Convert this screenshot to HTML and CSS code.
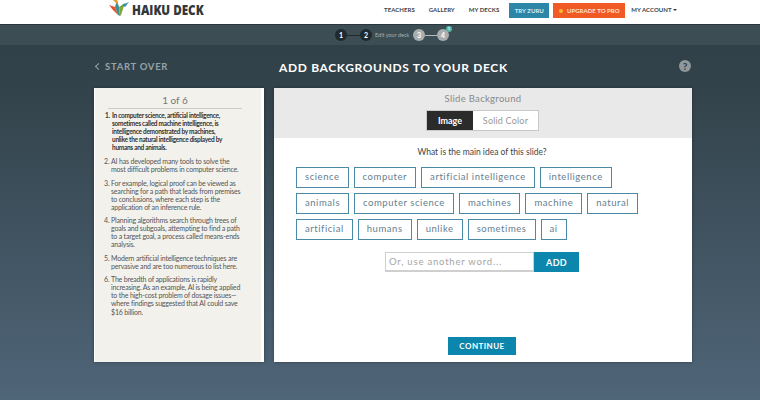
FILE: index.html
```html
<!DOCTYPE html>
<html lang="en">
<head>
  <meta charset="UTF-8">
  <meta name="viewport" content="width=device-width, initial-scale=1">
  <title>Haiku Deck</title>
  <link rel="stylesheet" href="styles.css">
</head>
<body>
  <header class="topbar">
    <a class="logo">
      <svg class="logo-mark" width="20" height="17" viewBox="0 0 20 17">
        <polygon points="0,5 6,7 9,15 4,10" fill="#e8502a"/>
        <polygon points="6,7 8,0 10,7 11,16 9,15" fill="#3f8f8c"/>
        <polygon points="4,0 8,0 9,5" fill="#e8a02a"/>
        <polygon points="10,7 16,3 12,15 11,16" fill="#7fa63c"/>
        <polygon points="13,5 20,2 16,7" fill="#2c8fb0"/>
      </svg>
      <span class="logo-text">HAIKU DECK</span>
    </a>
    <nav class="topnav">
      <a class="nav-link">TEACHERS</a>
      <a class="nav-link">GALLERY</a>
      <a class="nav-link">MY DECKS</a>
      <a class="btn-zuru">TRY ZURU</a>
      <a class="btn-pro"><span class="pro-dot"></span>UPGRADE TO PRO</a>
      <a class="nav-account">MY ACCOUNT <span class="caret"></span></a>
    </nav>
  </header>

  <div class="steps">
    <span class="step step-done">1</span>
    <span class="line"></span>
    <span class="step step-done">2</span>
    <span class="step-label">Edit your deck</span>
    <span class="step step-todo">3</span>
    <span class="line line-todo"></span>
    <span class="step step-todo">4<span class="step-badge">1</span></span>
  </div>

  <main class="page">
    <div class="title-row">
      <a class="start-over"><span class="chev"></span>START OVER</a>
      <h1>ADD BACKGROUNDS TO YOUR DECK</h1>
      <span class="help">?</span>
    </div>

    <div class="panels">
      <aside class="slide-text">
        <div class="count">1 of 6</div>
        <ol>
          <li class="current">In computer science, artificial intelligence, sometimes called machine intelligence, is intelligence demonstrated by machines,<br>unlike the natural intelligence displayed by<br>humans and animals.</li>
          <li>AI has developed many tools to solve the most difficult problems in computer science.</li>
          <li>For example, logical proof can be viewed as searching for a path that leads from premises to conclusions, where each step is the application of an inference rule.</li>
          <li>Planning algorithms search through trees of goals and subgoals, attempting to find a path to a target goal, a process called means-ends analysis.</li>
          <li>Modern artificial intelligence techniques are pervasive and are too numerous to list here.</li>
          <li>The breadth of applications is rapidly increasing. As an example, AI is being applied to the high-cost problem of dosage issues—where findings suggested that AI could save $16 billion.</li>
        </ol>
      </aside>

      <section class="editor">
        <div class="editor-head">
          <div class="editor-title">Slide Background</div>
          <div class="toggle">
            <span class="toggle-on">Image</span>
            <span class="toggle-off">Solid Color</span>
          </div>
        </div>
        <div class="editor-body">
          <p class="question">What is the main idea of this slide?</p>
          <div class="tags">
            <span class="tag">science</span>
            <span class="tag">computer</span>
            <span class="tag">artificial intelligence</span>
            <span class="tag">intelligence</span>
            <span class="tag">animals</span>
            <span class="tag">computer science</span>
            <span class="tag">machines</span>
            <span class="tag">machine</span>
            <span class="tag">natural</span>
            <span class="tag">artificial</span>
            <span class="tag">humans</span>
            <span class="tag">unlike</span>
            <span class="tag">sometimes</span>
            <span class="tag">ai</span>
          </div>
          <div class="word-form">
            <input class="word-input" type="text" placeholder="Or, use another word...">
            <button class="word-add">ADD</button>
          </div>
          <button class="continue">CONTINUE</button>
        </div>
      </section>
    </div>
  </main>
</body>
</html>
```

FILE: styles.css
```css
* { box-sizing: border-box; }
html, body { height: 100%; }
body {
  margin: 0;
  height: 400px;
  overflow: hidden;
  font-family: "Lato", sans-serif;
  background: linear-gradient(#2f3e45 0, #33434b 90px, #4f6578 400px);
}

.topbar {
  height: 25px;
  background: #fff;
  border-bottom: 1px solid #2a363b;
  display: flex;
  justify-content: space-between;
  padding: 0 83px 0 109px;
}
.logo { display: flex; align-items: flex-start; }
.logo-text {
  font-family: "Open Sans", sans-serif;
  font-weight: 800;
  font-size: 14px;
  line-height: 19px;
  color: #33373a;
  margin-left: 3px;
  white-space: nowrap;
  transform: scaleX(.83);
  transform-origin: left;
}
.topnav {
  display: flex;
  align-items: flex-start;
  font-size: 6px;
  font-weight: 700;
  letter-spacing: .05px;
  color: #3c4447;
  line-height: 20px;
}
.nav-link { margin-right: 14px; }
.nav-link:nth-child(3) { margin-right: 10px; }
.btn-zuru, .btn-pro {
  height: 15px;
  margin-top: 3px;
  line-height: 15px;
  text-align: center;
}
.btn-zuru { width: 40px; background: #2d86a8; color: #d7edf3; margin-right: 4px; }
.btn-pro { width: 72px; background: #f15a24; color: #ffe3d4; margin-right: 6px; }
.pro-dot {
  display: inline-block;
  width: 4px;
  height: 4px;
  background: #f7b733;
  border-radius: 50%;
  margin-right: 4px;
}
.caret {
  display: inline-block;
  border: 2px solid transparent;
  border-top: 2px solid #333;
  border-bottom: 0;
  vertical-align: middle;
}

.steps {
  height: 20px;
  background: #3c4d53;
  display: flex;
  align-items: center;
  padding-left: 335px;
  color: #fff;
}
.step {
  position: relative;
  width: 12px;
  height: 12px;
  border-radius: 50%;
  font-weight: 700;
  font-size: 7px;
  line-height: 12px;
  text-align: center;
}
.step-done { background: #1e2a30; }
.step-todo { background: #a9aeb0; }
.line { width: 13px; height: 1px; background: #1e2a30; }
.line-todo { width: 12px; background: #b5babb; }
.step-label {
  width: 35px;
  margin: 0 3px;
  color: #a4b0b3;
  white-space: nowrap;
  font-size: 5.5px;
}
.step-badge {
  position: absolute;
  top: -3px;
  right: -3px;
  width: 6px;
  height: 6px;
  border-radius: 50%;
  background: #55b9a6;
  font-size: 4px;
  line-height: 6px;
}

.page { width: 598px; margin-left: 94px; }
.title-row {
  height: 43px;
  display: flex;
  align-items: center;
  position: relative;
  padding-top: 1px;
}
.start-over {
  font-size: 9.5px;
  font-weight: 700;
  letter-spacing: .7px;
  color: #97a3a8;
  margin-bottom: 2px;
}
.chev {
  display: inline-block;
  width: 5px;
  height: 5px;
  border-left: 1.5px solid #97a3a8;
  border-bottom: 1.5px solid #97a3a8;
  transform: rotate(45deg);
  margin: 0 4px 1px 2px;
}
h1 {
  margin: 0 0 0 111px;
  font-size: 12px;
  font-weight: 700;
  letter-spacing: .63px;
  color: #fff;
}
.help {
  position: absolute;
  right: 1px;
  top: 15px;
  width: 12px;
  height: 12px;
  border-radius: 50%;
  background: #8f989b;
  color: #33434b;
  font-size: 10px;
  font-weight: 900;
  line-height: 12px;
  text-align: center;
}

.panels { display: flex; gap: 10px; height: 274px; }
.slide-text {
  width: 170px;
  background: #f2f1ec;
  border-left: 1px solid #fff;
  border-right: 3px solid #fff;
  padding: 6px 19px 0 13px;
  color: #555;
  box-shadow: 0 0 3px rgba(0, 0, 0, .35);
}
.count {
  font-size: 10px;
  line-height: 13px;
  padding-bottom: 1px;
  color: #777;
  text-align: center;
  border-bottom: 1px solid #ccc;
}
.slide-text ol {
  margin: 3px 0 0;
  padding: 0 0 0 3px;
  font-size: 7px;
  letter-spacing: -.18px;
  line-height: 8.1px;
  color: #555;
}
.slide-text li { margin-bottom: 5.2px; }
.slide-text li.current {
  margin-bottom: 4.8px;
  padding-left: 1px;
  font-size: 6.5px;
  font-weight: 700;
  color: #333;
  letter-spacing: -.28px;
}

.editor {
  flex: 1;
  background: #fff;
  display: flex;
  flex-direction: column;
  box-shadow: 0 0 3px rgba(0, 0, 0, .35);
}
.editor-head {
  height: 50px;
  background: #e9e9e9;
  padding-top: 5px;
  text-align: center;
}
.editor-title { font-size: 9.5px; line-height: 12px; letter-spacing: .3px; color: #888; }
.toggle {
  display: inline-flex;
  margin: 5px 1px 0 0;
  height: 21px;
  background: #fff;
  border: 1px solid #c9c9c9;
  font-size: 9px;
  line-height: 19px;
}
.toggle-on { width: 46px; background: #2b2b2b; color: #fff; font-weight: 700; }
.toggle-off { width: 65px; color: #999; letter-spacing: .2px; }

.editor-body {
  flex: 1;
  display: flex;
  flex-direction: column;
  align-items: center;
  padding: 0 24px 7px 22px;
}
.question { margin: 8px 0 0; font-size: 8.5px; line-height: 12px; color: #444; }
.tags {
  display: flex;
  flex-wrap: wrap;
  gap: 5px;
  align-self: flex-start;
  max-width: 360px;
  margin-top: 9px;
}
.tag {
  height: 21px;
  padding: 0 8px;
  border: 1.5px solid #4a8aa6;
  font-size: 9.5px;
  line-height: 18px;
  letter-spacing: .55px;
  color: #66808f;
}
.word-form { display: flex; margin-top: 12px; }
.word-input {
  width: 149px;
  height: 20px;
  border: 1px solid #cfcfcf;
  border-bottom-width: 2px;
  padding: 0 3px;
  font-family: inherit;
  font-size: 9.5px;
  letter-spacing: .8px;
  outline: none;
}
.word-input::placeholder { color: #a5a5a5; opacity: 1; }
.word-add, .continue {
  border: none;
  background: #0c86ac;
  color: #fff;
  font-family: inherit;
  font-weight: 700;
  padding: 0;
}
.word-add { width: 45px; height: 20px; font-size: 9px; letter-spacing: .3px; }
.continue {
  width: 68px;
  height: 18px;
  margin-top: auto;
  font-size: 8px;
  letter-spacing: .45px;
}
```
